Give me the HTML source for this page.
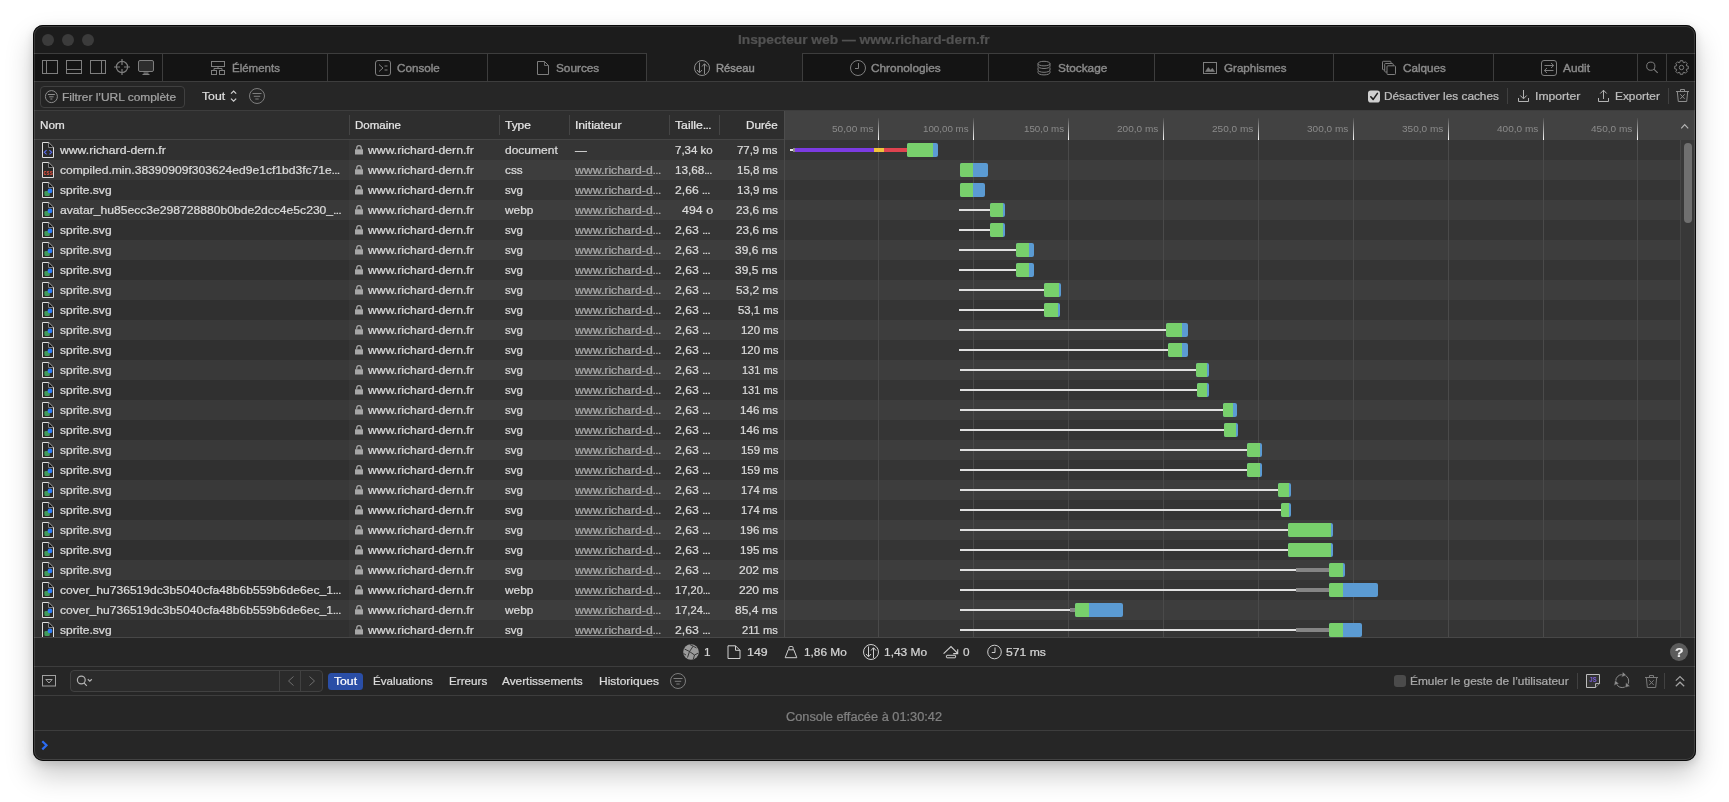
<!DOCTYPE html>
<html lang="fr"><head><meta charset="utf-8"><title>Inspecteur web — www.richard-dern.fr</title>
<style>
html,body{margin:0;padding:0;background:#fff;}
body{width:1729px;height:802px;overflow:hidden;position:relative;font-family:"Liberation Sans",sans-serif;}
#win{will-change:transform;position:absolute;left:33px;top:25px;width:1663px;height:736px;border-radius:10px;overflow:hidden;background:#262626;}
#shadow{position:absolute;left:33px;top:25px;width:1663px;height:736px;border-radius:10px;box-shadow:0 14px 28px rgba(0,0,0,0.21),0 3px 10px rgba(0,0,0,0.13);}
#ring{position:absolute;left:0;top:0;width:1663px;height:736px;border-radius:10px;box-shadow:inset 0 0 0 1px rgba(0,0,0,0.85),inset 0 0 0 2px rgba(255,255,255,0.13);pointer-events:none;}
.t{position:absolute;white-space:pre;line-height:20px;height:20px;transform-origin:0 50%;-webkit-text-stroke:0.24px currentColor;}
span.e{font-size:7.5px;letter-spacing:0;font-weight:700;}
u{text-decoration:underline;text-underline-offset:0.6px;text-decoration-thickness:0.9px;text-decoration-color:#8f8f8f;}
svg{position:absolute;overflow:visible;}
</style></head><body>
<div id="shadow"></div>
<div id="win">
<div style="position:absolute;left:0px;top:0px;width:1663px;height:28px;background:#1c1c1c;"></div><div style="position:absolute;left:9px;top:9px;width:12px;height:12px;background:#3b3b3b;border-radius:50%"></div><div style="position:absolute;left:29px;top:9px;width:12px;height:12px;background:#3b3b3b;border-radius:50%"></div><div style="position:absolute;left:49px;top:9px;width:12px;height:12px;background:#3b3b3b;border-radius:50%"></div><div style="position:absolute;left:0px;top:28px;width:1663px;height:29px;background:#141414;"></div><div style="position:absolute;left:0px;top:28px;width:1663px;height:1px;background:#3d3d3d;"></div><div style="position:absolute;left:0px;top:56px;width:1663px;height:1px;background:#3d3d3d;"></div><div style="position:absolute;left:614px;top:28px;width:155px;height:28px;background:#1c1c1c;"></div><div style="position:absolute;left:129px;top:28px;width:1px;height:28px;background:#3d3d3d;"></div><div style="position:absolute;left:294px;top:28px;width:1px;height:28px;background:#3d3d3d;"></div><div style="position:absolute;left:454px;top:28px;width:1px;height:28px;background:#3d3d3d;"></div><div style="position:absolute;left:613px;top:28px;width:1px;height:28px;background:#3d3d3d;"></div><div style="position:absolute;left:769px;top:28px;width:1px;height:28px;background:#3d3d3d;"></div><div style="position:absolute;left:955px;top:28px;width:1px;height:28px;background:#3d3d3d;"></div><div style="position:absolute;left:1121px;top:28px;width:1px;height:28px;background:#3d3d3d;"></div><div style="position:absolute;left:1300px;top:28px;width:1px;height:28px;background:#3d3d3d;"></div><div style="position:absolute;left:1460px;top:28px;width:1px;height:28px;background:#3d3d3d;"></div><div style="position:absolute;left:1604px;top:28px;width:1px;height:28px;background:#3d3d3d;"></div><div style="position:absolute;left:1633px;top:28px;width:1px;height:28px;background:#3d3d3d;"></div><div style="position:absolute;left:0px;top:57px;width:1663px;height:28px;background:#262626;"></div><div style="position:absolute;left:0px;top:85px;width:1663px;height:1px;background:#3d3d3d;"></div><div style="position:absolute;left:7px;top:61px;width:145px;height:22px;background:#232323;box-sizing:border-box;border:1px solid #404040;border-radius:4px"></div><div style="position:absolute;left:1474px;top:63px;width:1px;height:16px;background:#404040;"></div><div style="position:absolute;left:1635px;top:63px;width:1px;height:16px;background:#404040;"></div><div style="position:absolute;left:0px;top:86px;width:751px;height:28px;background:#2e2e2e;"></div><div style="position:absolute;left:751px;top:86px;width:911px;height:29px;background:#424242;"></div><div style="position:absolute;left:0px;top:114px;width:751px;height:1px;background:#454545;"></div><div style="position:absolute;left:316px;top:90px;width:1px;height:20px;background:#454545;"></div><div style="position:absolute;left:466px;top:90px;width:1px;height:20px;background:#454545;"></div><div style="position:absolute;left:536px;top:90px;width:1px;height:20px;background:#454545;"></div><div style="position:absolute;left:636px;top:90px;width:1px;height:20px;background:#454545;"></div><div style="position:absolute;left:686px;top:90px;width:1px;height:20px;background:#454545;"></div><div style="position:absolute;left:751px;top:86px;width:1px;height:29px;background:#4d4d4d;"></div><div style="position:absolute;left:845px;top:93px;width:1px;height:22px;background:linear-gradient(to bottom,rgba(255,255,255,0.05),rgba(255,255,255,0.98));"></div><div style="position:absolute;left:940px;top:93px;width:1px;height:22px;background:linear-gradient(to bottom,rgba(255,255,255,0.05),rgba(255,255,255,0.98));"></div><div style="position:absolute;left:1035px;top:93px;width:1px;height:22px;background:linear-gradient(to bottom,rgba(255,255,255,0.05),rgba(255,255,255,0.98));"></div><div style="position:absolute;left:1130px;top:93px;width:1px;height:22px;background:linear-gradient(to bottom,rgba(255,255,255,0.05),rgba(255,255,255,0.98));"></div><div style="position:absolute;left:1225px;top:93px;width:1px;height:22px;background:linear-gradient(to bottom,rgba(255,255,255,0.05),rgba(255,255,255,0.98));"></div><div style="position:absolute;left:1320px;top:93px;width:1px;height:22px;background:linear-gradient(to bottom,rgba(255,255,255,0.05),rgba(255,255,255,0.98));"></div><div style="position:absolute;left:1415px;top:93px;width:1px;height:22px;background:linear-gradient(to bottom,rgba(255,255,255,0.05),rgba(255,255,255,0.98));"></div><div style="position:absolute;left:1510px;top:93px;width:1px;height:22px;background:linear-gradient(to bottom,rgba(255,255,255,0.05),rgba(255,255,255,0.98));"></div><div style="position:absolute;left:1604px;top:93px;width:1px;height:22px;background:linear-gradient(to bottom,rgba(255,255,255,0.05),rgba(255,255,255,0.98));"></div><div style="position:absolute;left:0;top:115px;width:1663px;height:497px;overflow:hidden"><div style="position:absolute;left:0px;top:0px;width:316px;height:20px;background:#303030;"></div><div style="position:absolute;left:316px;top:0px;width:1331px;height:20px;background:#353535;"></div><div style="position:absolute;left:0px;top:20px;width:316px;height:20px;background:#393939;"></div><div style="position:absolute;left:316px;top:20px;width:1331px;height:20px;background:#3d3d3d;"></div><div style="position:absolute;left:0px;top:40px;width:316px;height:20px;background:#303030;"></div><div style="position:absolute;left:316px;top:40px;width:1331px;height:20px;background:#353535;"></div><div style="position:absolute;left:0px;top:60px;width:316px;height:20px;background:#393939;"></div><div style="position:absolute;left:316px;top:60px;width:1331px;height:20px;background:#3d3d3d;"></div><div style="position:absolute;left:0px;top:80px;width:316px;height:20px;background:#303030;"></div><div style="position:absolute;left:316px;top:80px;width:1331px;height:20px;background:#353535;"></div><div style="position:absolute;left:0px;top:100px;width:316px;height:20px;background:#393939;"></div><div style="position:absolute;left:316px;top:100px;width:1331px;height:20px;background:#3d3d3d;"></div><div style="position:absolute;left:0px;top:120px;width:316px;height:20px;background:#303030;"></div><div style="position:absolute;left:316px;top:120px;width:1331px;height:20px;background:#353535;"></div><div style="position:absolute;left:0px;top:140px;width:316px;height:20px;background:#393939;"></div><div style="position:absolute;left:316px;top:140px;width:1331px;height:20px;background:#3d3d3d;"></div><div style="position:absolute;left:0px;top:160px;width:316px;height:20px;background:#303030;"></div><div style="position:absolute;left:316px;top:160px;width:1331px;height:20px;background:#353535;"></div><div style="position:absolute;left:0px;top:180px;width:316px;height:20px;background:#393939;"></div><div style="position:absolute;left:316px;top:180px;width:1331px;height:20px;background:#3d3d3d;"></div><div style="position:absolute;left:0px;top:200px;width:316px;height:20px;background:#303030;"></div><div style="position:absolute;left:316px;top:200px;width:1331px;height:20px;background:#353535;"></div><div style="position:absolute;left:0px;top:220px;width:316px;height:20px;background:#393939;"></div><div style="position:absolute;left:316px;top:220px;width:1331px;height:20px;background:#3d3d3d;"></div><div style="position:absolute;left:0px;top:240px;width:316px;height:20px;background:#303030;"></div><div style="position:absolute;left:316px;top:240px;width:1331px;height:20px;background:#353535;"></div><div style="position:absolute;left:0px;top:260px;width:316px;height:20px;background:#393939;"></div><div style="position:absolute;left:316px;top:260px;width:1331px;height:20px;background:#3d3d3d;"></div><div style="position:absolute;left:0px;top:280px;width:316px;height:20px;background:#303030;"></div><div style="position:absolute;left:316px;top:280px;width:1331px;height:20px;background:#353535;"></div><div style="position:absolute;left:0px;top:300px;width:316px;height:20px;background:#393939;"></div><div style="position:absolute;left:316px;top:300px;width:1331px;height:20px;background:#3d3d3d;"></div><div style="position:absolute;left:0px;top:320px;width:316px;height:20px;background:#303030;"></div><div style="position:absolute;left:316px;top:320px;width:1331px;height:20px;background:#353535;"></div><div style="position:absolute;left:0px;top:340px;width:316px;height:20px;background:#393939;"></div><div style="position:absolute;left:316px;top:340px;width:1331px;height:20px;background:#3d3d3d;"></div><div style="position:absolute;left:0px;top:360px;width:316px;height:20px;background:#303030;"></div><div style="position:absolute;left:316px;top:360px;width:1331px;height:20px;background:#353535;"></div><div style="position:absolute;left:0px;top:380px;width:316px;height:20px;background:#393939;"></div><div style="position:absolute;left:316px;top:380px;width:1331px;height:20px;background:#3d3d3d;"></div><div style="position:absolute;left:0px;top:400px;width:316px;height:20px;background:#303030;"></div><div style="position:absolute;left:316px;top:400px;width:1331px;height:20px;background:#353535;"></div><div style="position:absolute;left:0px;top:420px;width:316px;height:20px;background:#393939;"></div><div style="position:absolute;left:316px;top:420px;width:1331px;height:20px;background:#3d3d3d;"></div><div style="position:absolute;left:0px;top:440px;width:316px;height:20px;background:#303030;"></div><div style="position:absolute;left:316px;top:440px;width:1331px;height:20px;background:#353535;"></div><div style="position:absolute;left:0px;top:460px;width:316px;height:20px;background:#393939;"></div><div style="position:absolute;left:316px;top:460px;width:1331px;height:20px;background:#3d3d3d;"></div><div style="position:absolute;left:0px;top:480px;width:316px;height:20px;background:#303030;"></div><div style="position:absolute;left:316px;top:480px;width:1331px;height:20px;background:#353535;"></div><div style="position:absolute;left:751px;top:0px;width:1px;height:500px;background:#4a4a4a;"></div><div style="position:absolute;left:845px;top:0px;width:1px;height:500px;background:#4a4a4a;"></div><div style="position:absolute;left:940px;top:0px;width:1px;height:500px;background:#4a4a4a;"></div><div style="position:absolute;left:1035px;top:0px;width:1px;height:500px;background:#4a4a4a;"></div><div style="position:absolute;left:1130px;top:0px;width:1px;height:500px;background:#4a4a4a;"></div><div style="position:absolute;left:1225px;top:0px;width:1px;height:500px;background:#4a4a4a;"></div><div style="position:absolute;left:1320px;top:0px;width:1px;height:500px;background:#4a4a4a;"></div><div style="position:absolute;left:1415px;top:0px;width:1px;height:500px;background:#4a4a4a;"></div><div style="position:absolute;left:1510px;top:0px;width:1px;height:500px;background:#4a4a4a;"></div><div style="position:absolute;left:1604px;top:0px;width:1px;height:500px;background:#4a4a4a;"></div><div style="position:absolute;left:1647px;top:0px;width:15px;height:500px;background:#383838;"></div><div style="position:absolute;left:1647px;top:0px;width:1px;height:500px;background:#454545;"></div><div style="position:absolute;left:1651px;top:3px;width:8px;height:80px;background:#6f6f6f;border-radius:4px"></div><svg style="left:9px;top:2px" width="12" height="16" viewBox="0 0 12 16"><path d="M0.5 0.5 H6.7 L11.5 5.3 V15.5 H0.5 Z" fill="#2a2a2a" stroke="#dedede" stroke-width="1"/><path d="M6.9 1.4 V5.1 H10.6 Z" fill="#0a0a0a" stroke="#0a0a0a" stroke-width="0.6"/><path d="M6.6 0.8 V5.4 H11.2" fill="none" stroke="#bdbdbd" stroke-width="0.7"/><path d="M4.6 8.2 L2.3 10.3 L4.6 12.4 M7.4 8.2 L9.7 10.3 L7.4 12.4" fill="none" stroke="#5a6cf2" stroke-width="1.1"/></svg><svg style="left:322px;top:4.5px" width="8" height="10" viewBox="0 0 8 10"><rect x="0" y="4.3" width="8" height="5.2" fill="#a8a8a8"/><path d="M1.75 4.5 V2.9 A2.25 2.3 0 0 1 6.25 2.9 V4.5" fill="none" stroke="#a8a8a8" stroke-width="1.25"/></svg><div style="position:absolute;left:757px;top:9px;width:4px;height:2px;background:#e6e6e6;"></div><div style="position:absolute;left:760px;top:8px;width:2px;height:4px;background:#8a8a8a;"></div><div style="position:absolute;left:761.6px;top:8px;width:79.4px;height:4px;background:#7c3be2;"></div><div style="position:absolute;left:841px;top:8px;width:10px;height:4px;background:#f0c23c;"></div><div style="position:absolute;left:851px;top:8px;width:23px;height:4px;background:#e0434f;"></div><div style="position:absolute;left:874px;top:3px;width:31px;height:14px;background:#5b9bd3;border-radius:2px"></div><div style="position:absolute;left:874px;top:3px;width:26px;height:14px;background:#78d06c;border-radius:2px 0 0 2px"></div><svg style="left:9px;top:22px" width="12" height="16" viewBox="0 0 12 16"><path d="M0.5 0.5 H6.7 L11.5 5.3 V15.5 H0.5 Z" fill="#2a2a2a" stroke="#dedede" stroke-width="1"/><path d="M6.9 1.4 V5.1 H10.6 Z" fill="#0a0a0a" stroke="#0a0a0a" stroke-width="0.6"/><path d="M6.6 0.8 V5.4 H11.2" fill="none" stroke="#bdbdbd" stroke-width="0.7"/><text x="6.1" y="12.6" text-anchor="middle" font-family="Liberation Sans,sans-serif" font-weight="700" font-size="6.4" fill="#e2513f" textLength="9.4" lengthAdjust="spacingAndGlyphs">css</text></svg><svg style="left:322px;top:24.5px" width="8" height="10" viewBox="0 0 8 10"><rect x="0" y="4.3" width="8" height="5.2" fill="#a8a8a8"/><path d="M1.75 4.5 V2.9 A2.25 2.3 0 0 1 6.25 2.9 V4.5" fill="none" stroke="#a8a8a8" stroke-width="1.25"/></svg><div style="position:absolute;left:927px;top:23px;width:28px;height:14px;background:#5b9bd3;border-radius:2px"></div><div style="position:absolute;left:927px;top:23px;width:13px;height:14px;background:#78d06c;border-radius:2px 0 0 2px"></div><svg style="left:9px;top:42px" width="12" height="16" viewBox="0 0 12 16"><path d="M0.5 0.5 H6.7 L11.5 5.3 V15.5 H0.5 Z" fill="#2a2a2a" stroke="#dedede" stroke-width="1"/><path d="M6.9 1.4 V5.1 H10.6 Z" fill="#0a0a0a" stroke="#0a0a0a" stroke-width="0.6"/><path d="M6.6 0.8 V5.4 H11.2" fill="none" stroke="#bdbdbd" stroke-width="0.7"/><rect x="2.4" y="9" width="5.4" height="5" rx="1.2" fill="#419a5b"/><circle cx="8" cy="8.9" r="2.4" fill="#2e7cf6"/></svg><svg style="left:322px;top:44.5px" width="8" height="10" viewBox="0 0 8 10"><rect x="0" y="4.3" width="8" height="5.2" fill="#a8a8a8"/><path d="M1.75 4.5 V2.9 A2.25 2.3 0 0 1 6.25 2.9 V4.5" fill="none" stroke="#a8a8a8" stroke-width="1.25"/></svg><div style="position:absolute;left:927px;top:43px;width:25px;height:14px;background:#5b9bd3;border-radius:2px"></div><div style="position:absolute;left:927px;top:43px;width:13px;height:14px;background:#78d06c;border-radius:2px 0 0 2px"></div><svg style="left:9px;top:62px" width="12" height="16" viewBox="0 0 12 16"><path d="M0.5 0.5 H6.7 L11.5 5.3 V15.5 H0.5 Z" fill="#2a2a2a" stroke="#dedede" stroke-width="1"/><path d="M6.9 1.4 V5.1 H10.6 Z" fill="#0a0a0a" stroke="#0a0a0a" stroke-width="0.6"/><path d="M6.6 0.8 V5.4 H11.2" fill="none" stroke="#bdbdbd" stroke-width="0.7"/><rect x="2.4" y="9" width="5.4" height="5" rx="1.2" fill="#419a5b"/><circle cx="8" cy="8.9" r="2.4" fill="#2e7cf6"/></svg><svg style="left:322px;top:64.5px" width="8" height="10" viewBox="0 0 8 10"><rect x="0" y="4.3" width="8" height="5.2" fill="#a8a8a8"/><path d="M1.75 4.5 V2.9 A2.25 2.3 0 0 1 6.25 2.9 V4.5" fill="none" stroke="#a8a8a8" stroke-width="1.25"/></svg><div style="position:absolute;left:926px;top:69px;width:31px;height:2px;background:#e2e2e2;"></div><div style="position:absolute;left:957px;top:63px;width:15px;height:14px;background:#5b9bd3;border-radius:2px"></div><div style="position:absolute;left:957px;top:63px;width:13px;height:14px;background:#78d06c;border-radius:2px 0 0 2px"></div><svg style="left:9px;top:82px" width="12" height="16" viewBox="0 0 12 16"><path d="M0.5 0.5 H6.7 L11.5 5.3 V15.5 H0.5 Z" fill="#2a2a2a" stroke="#dedede" stroke-width="1"/><path d="M6.9 1.4 V5.1 H10.6 Z" fill="#0a0a0a" stroke="#0a0a0a" stroke-width="0.6"/><path d="M6.6 0.8 V5.4 H11.2" fill="none" stroke="#bdbdbd" stroke-width="0.7"/><rect x="2.4" y="9" width="5.4" height="5" rx="1.2" fill="#419a5b"/><circle cx="8" cy="8.9" r="2.4" fill="#2e7cf6"/></svg><svg style="left:322px;top:84.5px" width="8" height="10" viewBox="0 0 8 10"><rect x="0" y="4.3" width="8" height="5.2" fill="#a8a8a8"/><path d="M1.75 4.5 V2.9 A2.25 2.3 0 0 1 6.25 2.9 V4.5" fill="none" stroke="#a8a8a8" stroke-width="1.25"/></svg><div style="position:absolute;left:926px;top:89px;width:31px;height:2px;background:#e2e2e2;"></div><div style="position:absolute;left:957px;top:83px;width:15px;height:14px;background:#5b9bd3;border-radius:2px"></div><div style="position:absolute;left:957px;top:83px;width:13px;height:14px;background:#78d06c;border-radius:2px 0 0 2px"></div><svg style="left:9px;top:102px" width="12" height="16" viewBox="0 0 12 16"><path d="M0.5 0.5 H6.7 L11.5 5.3 V15.5 H0.5 Z" fill="#2a2a2a" stroke="#dedede" stroke-width="1"/><path d="M6.9 1.4 V5.1 H10.6 Z" fill="#0a0a0a" stroke="#0a0a0a" stroke-width="0.6"/><path d="M6.6 0.8 V5.4 H11.2" fill="none" stroke="#bdbdbd" stroke-width="0.7"/><rect x="2.4" y="9" width="5.4" height="5" rx="1.2" fill="#419a5b"/><circle cx="8" cy="8.9" r="2.4" fill="#2e7cf6"/></svg><svg style="left:322px;top:104.5px" width="8" height="10" viewBox="0 0 8 10"><rect x="0" y="4.3" width="8" height="5.2" fill="#a8a8a8"/><path d="M1.75 4.5 V2.9 A2.25 2.3 0 0 1 6.25 2.9 V4.5" fill="none" stroke="#a8a8a8" stroke-width="1.25"/></svg><div style="position:absolute;left:926px;top:109px;width:57px;height:2px;background:#e2e2e2;"></div><div style="position:absolute;left:983px;top:103px;width:18px;height:14px;background:#5b9bd3;border-radius:2px"></div><div style="position:absolute;left:983px;top:103px;width:13px;height:14px;background:#78d06c;border-radius:2px 0 0 2px"></div><svg style="left:9px;top:122px" width="12" height="16" viewBox="0 0 12 16"><path d="M0.5 0.5 H6.7 L11.5 5.3 V15.5 H0.5 Z" fill="#2a2a2a" stroke="#dedede" stroke-width="1"/><path d="M6.9 1.4 V5.1 H10.6 Z" fill="#0a0a0a" stroke="#0a0a0a" stroke-width="0.6"/><path d="M6.6 0.8 V5.4 H11.2" fill="none" stroke="#bdbdbd" stroke-width="0.7"/><rect x="2.4" y="9" width="5.4" height="5" rx="1.2" fill="#419a5b"/><circle cx="8" cy="8.9" r="2.4" fill="#2e7cf6"/></svg><svg style="left:322px;top:124.5px" width="8" height="10" viewBox="0 0 8 10"><rect x="0" y="4.3" width="8" height="5.2" fill="#a8a8a8"/><path d="M1.75 4.5 V2.9 A2.25 2.3 0 0 1 6.25 2.9 V4.5" fill="none" stroke="#a8a8a8" stroke-width="1.25"/></svg><div style="position:absolute;left:926px;top:129px;width:57px;height:2px;background:#e2e2e2;"></div><div style="position:absolute;left:983px;top:123px;width:18px;height:14px;background:#5b9bd3;border-radius:2px"></div><div style="position:absolute;left:983px;top:123px;width:13px;height:14px;background:#78d06c;border-radius:2px 0 0 2px"></div><svg style="left:9px;top:142px" width="12" height="16" viewBox="0 0 12 16"><path d="M0.5 0.5 H6.7 L11.5 5.3 V15.5 H0.5 Z" fill="#2a2a2a" stroke="#dedede" stroke-width="1"/><path d="M6.9 1.4 V5.1 H10.6 Z" fill="#0a0a0a" stroke="#0a0a0a" stroke-width="0.6"/><path d="M6.6 0.8 V5.4 H11.2" fill="none" stroke="#bdbdbd" stroke-width="0.7"/><rect x="2.4" y="9" width="5.4" height="5" rx="1.2" fill="#419a5b"/><circle cx="8" cy="8.9" r="2.4" fill="#2e7cf6"/></svg><svg style="left:322px;top:144.5px" width="8" height="10" viewBox="0 0 8 10"><rect x="0" y="4.3" width="8" height="5.2" fill="#a8a8a8"/><path d="M1.75 4.5 V2.9 A2.25 2.3 0 0 1 6.25 2.9 V4.5" fill="none" stroke="#a8a8a8" stroke-width="1.25"/></svg><div style="position:absolute;left:926px;top:149px;width:85px;height:2px;background:#e2e2e2;"></div><div style="position:absolute;left:1011px;top:143px;width:17px;height:14px;background:#5b9bd3;border-radius:2px"></div><div style="position:absolute;left:1011px;top:143px;width:15px;height:14px;background:#78d06c;border-radius:2px 0 0 2px"></div><svg style="left:9px;top:162px" width="12" height="16" viewBox="0 0 12 16"><path d="M0.5 0.5 H6.7 L11.5 5.3 V15.5 H0.5 Z" fill="#2a2a2a" stroke="#dedede" stroke-width="1"/><path d="M6.9 1.4 V5.1 H10.6 Z" fill="#0a0a0a" stroke="#0a0a0a" stroke-width="0.6"/><path d="M6.6 0.8 V5.4 H11.2" fill="none" stroke="#bdbdbd" stroke-width="0.7"/><rect x="2.4" y="9" width="5.4" height="5" rx="1.2" fill="#419a5b"/><circle cx="8" cy="8.9" r="2.4" fill="#2e7cf6"/></svg><svg style="left:322px;top:164.5px" width="8" height="10" viewBox="0 0 8 10"><rect x="0" y="4.3" width="8" height="5.2" fill="#a8a8a8"/><path d="M1.75 4.5 V2.9 A2.25 2.3 0 0 1 6.25 2.9 V4.5" fill="none" stroke="#a8a8a8" stroke-width="1.25"/></svg><div style="position:absolute;left:926px;top:169px;width:85px;height:2px;background:#e2e2e2;"></div><div style="position:absolute;left:1011px;top:163px;width:16px;height:14px;background:#5b9bd3;border-radius:2px"></div><div style="position:absolute;left:1011px;top:163px;width:14px;height:14px;background:#78d06c;border-radius:2px 0 0 2px"></div><svg style="left:9px;top:182px" width="12" height="16" viewBox="0 0 12 16"><path d="M0.5 0.5 H6.7 L11.5 5.3 V15.5 H0.5 Z" fill="#2a2a2a" stroke="#dedede" stroke-width="1"/><path d="M6.9 1.4 V5.1 H10.6 Z" fill="#0a0a0a" stroke="#0a0a0a" stroke-width="0.6"/><path d="M6.6 0.8 V5.4 H11.2" fill="none" stroke="#bdbdbd" stroke-width="0.7"/><rect x="2.4" y="9" width="5.4" height="5" rx="1.2" fill="#419a5b"/><circle cx="8" cy="8.9" r="2.4" fill="#2e7cf6"/></svg><svg style="left:322px;top:184.5px" width="8" height="10" viewBox="0 0 8 10"><rect x="0" y="4.3" width="8" height="5.2" fill="#a8a8a8"/><path d="M1.75 4.5 V2.9 A2.25 2.3 0 0 1 6.25 2.9 V4.5" fill="none" stroke="#a8a8a8" stroke-width="1.25"/></svg><div style="position:absolute;left:926px;top:189px;width:207px;height:2px;background:#e2e2e2;"></div><div style="position:absolute;left:1133px;top:183px;width:22px;height:14px;background:#5b9bd3;border-radius:2px"></div><div style="position:absolute;left:1133px;top:183px;width:16px;height:14px;background:#78d06c;border-radius:2px 0 0 2px"></div><svg style="left:9px;top:202px" width="12" height="16" viewBox="0 0 12 16"><path d="M0.5 0.5 H6.7 L11.5 5.3 V15.5 H0.5 Z" fill="#2a2a2a" stroke="#dedede" stroke-width="1"/><path d="M6.9 1.4 V5.1 H10.6 Z" fill="#0a0a0a" stroke="#0a0a0a" stroke-width="0.6"/><path d="M6.6 0.8 V5.4 H11.2" fill="none" stroke="#bdbdbd" stroke-width="0.7"/><rect x="2.4" y="9" width="5.4" height="5" rx="1.2" fill="#419a5b"/><circle cx="8" cy="8.9" r="2.4" fill="#2e7cf6"/></svg><svg style="left:322px;top:204.5px" width="8" height="10" viewBox="0 0 8 10"><rect x="0" y="4.3" width="8" height="5.2" fill="#a8a8a8"/><path d="M1.75 4.5 V2.9 A2.25 2.3 0 0 1 6.25 2.9 V4.5" fill="none" stroke="#a8a8a8" stroke-width="1.25"/></svg><div style="position:absolute;left:926px;top:209px;width:209px;height:2px;background:#e2e2e2;"></div><div style="position:absolute;left:1135px;top:203px;width:20px;height:14px;background:#5b9bd3;border-radius:2px"></div><div style="position:absolute;left:1135px;top:203px;width:14px;height:14px;background:#78d06c;border-radius:2px 0 0 2px"></div><svg style="left:9px;top:222px" width="12" height="16" viewBox="0 0 12 16"><path d="M0.5 0.5 H6.7 L11.5 5.3 V15.5 H0.5 Z" fill="#2a2a2a" stroke="#dedede" stroke-width="1"/><path d="M6.9 1.4 V5.1 H10.6 Z" fill="#0a0a0a" stroke="#0a0a0a" stroke-width="0.6"/><path d="M6.6 0.8 V5.4 H11.2" fill="none" stroke="#bdbdbd" stroke-width="0.7"/><rect x="2.4" y="9" width="5.4" height="5" rx="1.2" fill="#419a5b"/><circle cx="8" cy="8.9" r="2.4" fill="#2e7cf6"/></svg><svg style="left:322px;top:224.5px" width="8" height="10" viewBox="0 0 8 10"><rect x="0" y="4.3" width="8" height="5.2" fill="#a8a8a8"/><path d="M1.75 4.5 V2.9 A2.25 2.3 0 0 1 6.25 2.9 V4.5" fill="none" stroke="#a8a8a8" stroke-width="1.25"/></svg><div style="position:absolute;left:927px;top:229px;width:236px;height:2px;background:#e2e2e2;"></div><div style="position:absolute;left:1163px;top:223px;width:13px;height:14px;background:#5b9bd3;border-radius:2px"></div><div style="position:absolute;left:1163px;top:223px;width:11px;height:14px;background:#78d06c;border-radius:2px 0 0 2px"></div><svg style="left:9px;top:242px" width="12" height="16" viewBox="0 0 12 16"><path d="M0.5 0.5 H6.7 L11.5 5.3 V15.5 H0.5 Z" fill="#2a2a2a" stroke="#dedede" stroke-width="1"/><path d="M6.9 1.4 V5.1 H10.6 Z" fill="#0a0a0a" stroke="#0a0a0a" stroke-width="0.6"/><path d="M6.6 0.8 V5.4 H11.2" fill="none" stroke="#bdbdbd" stroke-width="0.7"/><rect x="2.4" y="9" width="5.4" height="5" rx="1.2" fill="#419a5b"/><circle cx="8" cy="8.9" r="2.4" fill="#2e7cf6"/></svg><svg style="left:322px;top:244.5px" width="8" height="10" viewBox="0 0 8 10"><rect x="0" y="4.3" width="8" height="5.2" fill="#a8a8a8"/><path d="M1.75 4.5 V2.9 A2.25 2.3 0 0 1 6.25 2.9 V4.5" fill="none" stroke="#a8a8a8" stroke-width="1.25"/></svg><div style="position:absolute;left:927px;top:249px;width:237px;height:2px;background:#e2e2e2;"></div><div style="position:absolute;left:1164px;top:243px;width:12px;height:14px;background:#5b9bd3;border-radius:2px"></div><div style="position:absolute;left:1164px;top:243px;width:10px;height:14px;background:#78d06c;border-radius:2px 0 0 2px"></div><svg style="left:9px;top:262px" width="12" height="16" viewBox="0 0 12 16"><path d="M0.5 0.5 H6.7 L11.5 5.3 V15.5 H0.5 Z" fill="#2a2a2a" stroke="#dedede" stroke-width="1"/><path d="M6.9 1.4 V5.1 H10.6 Z" fill="#0a0a0a" stroke="#0a0a0a" stroke-width="0.6"/><path d="M6.6 0.8 V5.4 H11.2" fill="none" stroke="#bdbdbd" stroke-width="0.7"/><rect x="2.4" y="9" width="5.4" height="5" rx="1.2" fill="#419a5b"/><circle cx="8" cy="8.9" r="2.4" fill="#2e7cf6"/></svg><svg style="left:322px;top:264.5px" width="8" height="10" viewBox="0 0 8 10"><rect x="0" y="4.3" width="8" height="5.2" fill="#a8a8a8"/><path d="M1.75 4.5 V2.9 A2.25 2.3 0 0 1 6.25 2.9 V4.5" fill="none" stroke="#a8a8a8" stroke-width="1.25"/></svg><div style="position:absolute;left:927px;top:269px;width:263px;height:2px;background:#e2e2e2;"></div><div style="position:absolute;left:1190px;top:263px;width:14px;height:14px;background:#5b9bd3;border-radius:2px"></div><div style="position:absolute;left:1190px;top:263px;width:10px;height:14px;background:#78d06c;border-radius:2px 0 0 2px"></div><svg style="left:9px;top:282px" width="12" height="16" viewBox="0 0 12 16"><path d="M0.5 0.5 H6.7 L11.5 5.3 V15.5 H0.5 Z" fill="#2a2a2a" stroke="#dedede" stroke-width="1"/><path d="M6.9 1.4 V5.1 H10.6 Z" fill="#0a0a0a" stroke="#0a0a0a" stroke-width="0.6"/><path d="M6.6 0.8 V5.4 H11.2" fill="none" stroke="#bdbdbd" stroke-width="0.7"/><rect x="2.4" y="9" width="5.4" height="5" rx="1.2" fill="#419a5b"/><circle cx="8" cy="8.9" r="2.4" fill="#2e7cf6"/></svg><svg style="left:322px;top:284.5px" width="8" height="10" viewBox="0 0 8 10"><rect x="0" y="4.3" width="8" height="5.2" fill="#a8a8a8"/><path d="M1.75 4.5 V2.9 A2.25 2.3 0 0 1 6.25 2.9 V4.5" fill="none" stroke="#a8a8a8" stroke-width="1.25"/></svg><div style="position:absolute;left:927px;top:289px;width:264px;height:2px;background:#e2e2e2;"></div><div style="position:absolute;left:1191px;top:283px;width:14px;height:14px;background:#5b9bd3;border-radius:2px"></div><div style="position:absolute;left:1191px;top:283px;width:12px;height:14px;background:#78d06c;border-radius:2px 0 0 2px"></div><svg style="left:9px;top:302px" width="12" height="16" viewBox="0 0 12 16"><path d="M0.5 0.5 H6.7 L11.5 5.3 V15.5 H0.5 Z" fill="#2a2a2a" stroke="#dedede" stroke-width="1"/><path d="M6.9 1.4 V5.1 H10.6 Z" fill="#0a0a0a" stroke="#0a0a0a" stroke-width="0.6"/><path d="M6.6 0.8 V5.4 H11.2" fill="none" stroke="#bdbdbd" stroke-width="0.7"/><rect x="2.4" y="9" width="5.4" height="5" rx="1.2" fill="#419a5b"/><circle cx="8" cy="8.9" r="2.4" fill="#2e7cf6"/></svg><svg style="left:322px;top:304.5px" width="8" height="10" viewBox="0 0 8 10"><rect x="0" y="4.3" width="8" height="5.2" fill="#a8a8a8"/><path d="M1.75 4.5 V2.9 A2.25 2.3 0 0 1 6.25 2.9 V4.5" fill="none" stroke="#a8a8a8" stroke-width="1.25"/></svg><div style="position:absolute;left:927px;top:309px;width:287px;height:2px;background:#e2e2e2;"></div><div style="position:absolute;left:1214px;top:303px;width:15px;height:14px;background:#5b9bd3;border-radius:2px"></div><div style="position:absolute;left:1214px;top:303px;width:13px;height:14px;background:#78d06c;border-radius:2px 0 0 2px"></div><svg style="left:9px;top:322px" width="12" height="16" viewBox="0 0 12 16"><path d="M0.5 0.5 H6.7 L11.5 5.3 V15.5 H0.5 Z" fill="#2a2a2a" stroke="#dedede" stroke-width="1"/><path d="M6.9 1.4 V5.1 H10.6 Z" fill="#0a0a0a" stroke="#0a0a0a" stroke-width="0.6"/><path d="M6.6 0.8 V5.4 H11.2" fill="none" stroke="#bdbdbd" stroke-width="0.7"/><rect x="2.4" y="9" width="5.4" height="5" rx="1.2" fill="#419a5b"/><circle cx="8" cy="8.9" r="2.4" fill="#2e7cf6"/></svg><svg style="left:322px;top:324.5px" width="8" height="10" viewBox="0 0 8 10"><rect x="0" y="4.3" width="8" height="5.2" fill="#a8a8a8"/><path d="M1.75 4.5 V2.9 A2.25 2.3 0 0 1 6.25 2.9 V4.5" fill="none" stroke="#a8a8a8" stroke-width="1.25"/></svg><div style="position:absolute;left:927px;top:329px;width:287px;height:2px;background:#e2e2e2;"></div><div style="position:absolute;left:1214px;top:323px;width:15px;height:14px;background:#5b9bd3;border-radius:2px"></div><div style="position:absolute;left:1214px;top:323px;width:13px;height:14px;background:#78d06c;border-radius:2px 0 0 2px"></div><svg style="left:9px;top:342px" width="12" height="16" viewBox="0 0 12 16"><path d="M0.5 0.5 H6.7 L11.5 5.3 V15.5 H0.5 Z" fill="#2a2a2a" stroke="#dedede" stroke-width="1"/><path d="M6.9 1.4 V5.1 H10.6 Z" fill="#0a0a0a" stroke="#0a0a0a" stroke-width="0.6"/><path d="M6.6 0.8 V5.4 H11.2" fill="none" stroke="#bdbdbd" stroke-width="0.7"/><rect x="2.4" y="9" width="5.4" height="5" rx="1.2" fill="#419a5b"/><circle cx="8" cy="8.9" r="2.4" fill="#2e7cf6"/></svg><svg style="left:322px;top:344.5px" width="8" height="10" viewBox="0 0 8 10"><rect x="0" y="4.3" width="8" height="5.2" fill="#a8a8a8"/><path d="M1.75 4.5 V2.9 A2.25 2.3 0 0 1 6.25 2.9 V4.5" fill="none" stroke="#a8a8a8" stroke-width="1.25"/></svg><div style="position:absolute;left:927px;top:349px;width:318px;height:2px;background:#e2e2e2;"></div><div style="position:absolute;left:1245px;top:343px;width:13px;height:14px;background:#5b9bd3;border-radius:2px"></div><div style="position:absolute;left:1245px;top:343px;width:11px;height:14px;background:#78d06c;border-radius:2px 0 0 2px"></div><svg style="left:9px;top:362px" width="12" height="16" viewBox="0 0 12 16"><path d="M0.5 0.5 H6.7 L11.5 5.3 V15.5 H0.5 Z" fill="#2a2a2a" stroke="#dedede" stroke-width="1"/><path d="M6.9 1.4 V5.1 H10.6 Z" fill="#0a0a0a" stroke="#0a0a0a" stroke-width="0.6"/><path d="M6.6 0.8 V5.4 H11.2" fill="none" stroke="#bdbdbd" stroke-width="0.7"/><rect x="2.4" y="9" width="5.4" height="5" rx="1.2" fill="#419a5b"/><circle cx="8" cy="8.9" r="2.4" fill="#2e7cf6"/></svg><svg style="left:322px;top:364.5px" width="8" height="10" viewBox="0 0 8 10"><rect x="0" y="4.3" width="8" height="5.2" fill="#a8a8a8"/><path d="M1.75 4.5 V2.9 A2.25 2.3 0 0 1 6.25 2.9 V4.5" fill="none" stroke="#a8a8a8" stroke-width="1.25"/></svg><div style="position:absolute;left:927px;top:369px;width:321px;height:2px;background:#e2e2e2;"></div><div style="position:absolute;left:1248px;top:363px;width:10px;height:14px;background:#5b9bd3;border-radius:2px"></div><div style="position:absolute;left:1248px;top:363px;width:8px;height:14px;background:#78d06c;border-radius:2px 0 0 2px"></div><svg style="left:9px;top:382px" width="12" height="16" viewBox="0 0 12 16"><path d="M0.5 0.5 H6.7 L11.5 5.3 V15.5 H0.5 Z" fill="#2a2a2a" stroke="#dedede" stroke-width="1"/><path d="M6.9 1.4 V5.1 H10.6 Z" fill="#0a0a0a" stroke="#0a0a0a" stroke-width="0.6"/><path d="M6.6 0.8 V5.4 H11.2" fill="none" stroke="#bdbdbd" stroke-width="0.7"/><rect x="2.4" y="9" width="5.4" height="5" rx="1.2" fill="#419a5b"/><circle cx="8" cy="8.9" r="2.4" fill="#2e7cf6"/></svg><svg style="left:322px;top:384.5px" width="8" height="10" viewBox="0 0 8 10"><rect x="0" y="4.3" width="8" height="5.2" fill="#a8a8a8"/><path d="M1.75 4.5 V2.9 A2.25 2.3 0 0 1 6.25 2.9 V4.5" fill="none" stroke="#a8a8a8" stroke-width="1.25"/></svg><div style="position:absolute;left:927px;top:389px;width:328px;height:2px;background:#e2e2e2;"></div><div style="position:absolute;left:1255px;top:383px;width:45px;height:14px;background:#5b9bd3;border-radius:2px"></div><div style="position:absolute;left:1255px;top:383px;width:43px;height:14px;background:#78d06c;border-radius:2px 0 0 2px"></div><svg style="left:9px;top:402px" width="12" height="16" viewBox="0 0 12 16"><path d="M0.5 0.5 H6.7 L11.5 5.3 V15.5 H0.5 Z" fill="#2a2a2a" stroke="#dedede" stroke-width="1"/><path d="M6.9 1.4 V5.1 H10.6 Z" fill="#0a0a0a" stroke="#0a0a0a" stroke-width="0.6"/><path d="M6.6 0.8 V5.4 H11.2" fill="none" stroke="#bdbdbd" stroke-width="0.7"/><rect x="2.4" y="9" width="5.4" height="5" rx="1.2" fill="#419a5b"/><circle cx="8" cy="8.9" r="2.4" fill="#2e7cf6"/></svg><svg style="left:322px;top:404.5px" width="8" height="10" viewBox="0 0 8 10"><rect x="0" y="4.3" width="8" height="5.2" fill="#a8a8a8"/><path d="M1.75 4.5 V2.9 A2.25 2.3 0 0 1 6.25 2.9 V4.5" fill="none" stroke="#a8a8a8" stroke-width="1.25"/></svg><div style="position:absolute;left:927px;top:409px;width:328px;height:2px;background:#e2e2e2;"></div><div style="position:absolute;left:1255px;top:403px;width:45px;height:14px;background:#5b9bd3;border-radius:2px"></div><div style="position:absolute;left:1255px;top:403px;width:43px;height:14px;background:#78d06c;border-radius:2px 0 0 2px"></div><svg style="left:9px;top:422px" width="12" height="16" viewBox="0 0 12 16"><path d="M0.5 0.5 H6.7 L11.5 5.3 V15.5 H0.5 Z" fill="#2a2a2a" stroke="#dedede" stroke-width="1"/><path d="M6.9 1.4 V5.1 H10.6 Z" fill="#0a0a0a" stroke="#0a0a0a" stroke-width="0.6"/><path d="M6.6 0.8 V5.4 H11.2" fill="none" stroke="#bdbdbd" stroke-width="0.7"/><rect x="2.4" y="9" width="5.4" height="5" rx="1.2" fill="#419a5b"/><circle cx="8" cy="8.9" r="2.4" fill="#2e7cf6"/></svg><svg style="left:322px;top:424.5px" width="8" height="10" viewBox="0 0 8 10"><rect x="0" y="4.3" width="8" height="5.2" fill="#a8a8a8"/><path d="M1.75 4.5 V2.9 A2.25 2.3 0 0 1 6.25 2.9 V4.5" fill="none" stroke="#a8a8a8" stroke-width="1.25"/></svg><div style="position:absolute;left:927px;top:429px;width:336px;height:2px;background:#e2e2e2;"></div><div style="position:absolute;left:1263px;top:428px;width:33px;height:4px;background:#858585;"></div><div style="position:absolute;left:1296px;top:423px;width:16px;height:14px;background:#5b9bd3;border-radius:2px"></div><div style="position:absolute;left:1296px;top:423px;width:14px;height:14px;background:#78d06c;border-radius:2px 0 0 2px"></div><svg style="left:9px;top:442px" width="12" height="16" viewBox="0 0 12 16"><path d="M0.5 0.5 H6.7 L11.5 5.3 V15.5 H0.5 Z" fill="#2a2a2a" stroke="#dedede" stroke-width="1"/><path d="M6.9 1.4 V5.1 H10.6 Z" fill="#0a0a0a" stroke="#0a0a0a" stroke-width="0.6"/><path d="M6.6 0.8 V5.4 H11.2" fill="none" stroke="#bdbdbd" stroke-width="0.7"/><rect x="2.4" y="9" width="5.4" height="5" rx="1.2" fill="#419a5b"/><circle cx="8" cy="8.9" r="2.4" fill="#2e7cf6"/></svg><svg style="left:322px;top:444.5px" width="8" height="10" viewBox="0 0 8 10"><rect x="0" y="4.3" width="8" height="5.2" fill="#a8a8a8"/><path d="M1.75 4.5 V2.9 A2.25 2.3 0 0 1 6.25 2.9 V4.5" fill="none" stroke="#a8a8a8" stroke-width="1.25"/></svg><div style="position:absolute;left:927px;top:449px;width:336px;height:2px;background:#e2e2e2;"></div><div style="position:absolute;left:1263px;top:448px;width:33px;height:4px;background:#858585;"></div><div style="position:absolute;left:1296px;top:443px;width:49px;height:14px;background:#5b9bd3;border-radius:2px"></div><div style="position:absolute;left:1296px;top:443px;width:14px;height:14px;background:#78d06c;border-radius:2px 0 0 2px"></div><svg style="left:9px;top:462px" width="12" height="16" viewBox="0 0 12 16"><path d="M0.5 0.5 H6.7 L11.5 5.3 V15.5 H0.5 Z" fill="#2a2a2a" stroke="#dedede" stroke-width="1"/><path d="M6.9 1.4 V5.1 H10.6 Z" fill="#0a0a0a" stroke="#0a0a0a" stroke-width="0.6"/><path d="M6.6 0.8 V5.4 H11.2" fill="none" stroke="#bdbdbd" stroke-width="0.7"/><rect x="2.4" y="9" width="5.4" height="5" rx="1.2" fill="#419a5b"/><circle cx="8" cy="8.9" r="2.4" fill="#2e7cf6"/></svg><svg style="left:322px;top:464.5px" width="8" height="10" viewBox="0 0 8 10"><rect x="0" y="4.3" width="8" height="5.2" fill="#a8a8a8"/><path d="M1.75 4.5 V2.9 A2.25 2.3 0 0 1 6.25 2.9 V4.5" fill="none" stroke="#a8a8a8" stroke-width="1.25"/></svg><div style="position:absolute;left:927px;top:469px;width:110px;height:2px;background:#e2e2e2;"></div><div style="position:absolute;left:1037px;top:468px;width:5px;height:4px;background:#858585;"></div><div style="position:absolute;left:1042px;top:463px;width:48px;height:14px;background:#5b9bd3;border-radius:2px"></div><div style="position:absolute;left:1042px;top:463px;width:14px;height:14px;background:#78d06c;border-radius:2px 0 0 2px"></div><svg style="left:9px;top:482px" width="12" height="16" viewBox="0 0 12 16"><path d="M0.5 0.5 H6.7 L11.5 5.3 V15.5 H0.5 Z" fill="#2a2a2a" stroke="#dedede" stroke-width="1"/><path d="M6.9 1.4 V5.1 H10.6 Z" fill="#0a0a0a" stroke="#0a0a0a" stroke-width="0.6"/><path d="M6.6 0.8 V5.4 H11.2" fill="none" stroke="#bdbdbd" stroke-width="0.7"/><rect x="2.4" y="9" width="5.4" height="5" rx="1.2" fill="#419a5b"/><circle cx="8" cy="8.9" r="2.4" fill="#2e7cf6"/></svg><svg style="left:322px;top:484.5px" width="8" height="10" viewBox="0 0 8 10"><rect x="0" y="4.3" width="8" height="5.2" fill="#a8a8a8"/><path d="M1.75 4.5 V2.9 A2.25 2.3 0 0 1 6.25 2.9 V4.5" fill="none" stroke="#a8a8a8" stroke-width="1.25"/></svg><div style="position:absolute;left:927px;top:489px;width:336px;height:2px;background:#e2e2e2;"></div><div style="position:absolute;left:1263px;top:488px;width:33px;height:4px;background:#858585;"></div><div style="position:absolute;left:1296px;top:483px;width:33px;height:14px;background:#5b9bd3;border-radius:2px"></div><div style="position:absolute;left:1296px;top:483px;width:14px;height:14px;background:#78d06c;border-radius:2px 0 0 2px"></div><span class="t" style="left:26.84px;top:480.30px;font-size:11px;color:#dbdbdb;transform:scaleX(1.0964);">sprite.svg</span><span class="t" style="left:334.74px;top:480.30px;font-size:11px;color:#dbdbdb;transform:scaleX(1.1097);">www.richard-dern.fr</span><span class="t" style="left:471.84px;top:480.30px;font-size:11px;color:#dbdbdb;transform:scaleX(1.0462);">svg</span><span class="t" style="left:541.74px;top:480.30px;font-size:11px;color:#a9a9a9;transform:scaleX(1.1152);"><u>www.richard-d</u><span class="e">…</span></span><span class="t" style="left:642.04px;top:480.30px;font-size:11px;color:#dbdbdb;transform:scaleX(1.1123);">2,63 <span class="e">…</span></span><span class="t" style="left:709.14px;top:480.30px;font-size:11px;color:#dbdbdb;transform:scaleX(1.0156);">211 ms</span></div><div style="position:absolute;left:0px;top:612px;width:1663px;height:1px;background:#474747;"></div><div style="position:absolute;left:0px;top:613px;width:1663px;height:28px;background:#262626;"></div><div style="position:absolute;left:0px;top:641px;width:1663px;height:1px;background:#3d3d3d;"></div><div style="position:absolute;left:1637px;top:618px;width:18px;height:18px;background:#5c5c5c;border-radius:50%"></div><div style="position:absolute;left:0px;top:642px;width:1663px;height:28px;background:#262626;"></div><div style="position:absolute;left:0px;top:670px;width:1663px;height:1px;background:#3d3d3d;"></div><div style="position:absolute;left:37px;top:645px;width:253px;height:22px;background:#2b2b2b;box-sizing:border-box;border:1px solid #414141;border-radius:4px"></div><div style="position:absolute;left:246px;top:646px;width:1px;height:20px;background:#414141;"></div><div style="position:absolute;left:267px;top:646px;width:1px;height:20px;background:#414141;"></div><div style="position:absolute;left:295px;top:648px;width:35px;height:17px;background:#2a4ea6;border-radius:3.5px"></div><div style="position:absolute;left:1361px;top:650px;width:12px;height:12px;background:#4b4b4b;border-radius:3px"></div><div style="position:absolute;left:1544px;top:648px;width:1px;height:16px;background:#414141;"></div><div style="position:absolute;left:1631px;top:648px;width:1px;height:16px;background:#414141;"></div><div style="position:absolute;left:0px;top:671px;width:1663px;height:34px;background:#262626;"></div><div style="position:absolute;left:0px;top:705px;width:1663px;height:1px;background:#3d3d3d;"></div><div style="position:absolute;left:0px;top:706px;width:1663px;height:30px;background:#262626;"></div><svg style="left:0;top:0" width="1663" height="736" viewBox="33 25 1663 736" fill="none" stroke-linecap="butt"><g stroke="#7e7e7e" stroke-width="1"><rect x="42.5" y="60.5" width="15" height="13"/><path d="M46.5 60.5 V73.5"/><rect x="66.5" y="60.5" width="15" height="13"/><path d="M66.5 69.5 H81.5"/><rect x="90.5" y="60.5" width="15" height="13"/><path d="M101.5 60.5 V73.5"/><circle cx="122" cy="67" r="5.6" stroke-width="1.2"/><path d="M114 67 H120 M124 67 H130 M122 59 V65 M122 69 V75" stroke-width="1.2"/><rect x="138.5" y="60.5" width="15" height="11" rx="1.5" fill="#2d2d2d"/><path d="M143.5 73.2 H148.5 M142.5 74.5 H149.5" stroke-width="1.2"/><rect x="211.5" y="61.5" width="13" height="5"/><path d="M218 66.5 V68.5 M214 70.5 V68.5 H222 V70.5"/><rect x="211.5" y="70.5" width="5" height="4"/><rect x="219.5" y="70.5" width="5" height="4"/><rect x="375.5" y="60.5" width="15" height="15" rx="2.5"/><path d="M379 64.5 L383 68 L379 71.5 M384.5 66 H387.5 M384.5 70 H387.5"/><path d="M537.5 61.5 H544.5 L548.5 65.5 V74.5 H537.5 Z"/><path d="M544.5 61.5 V65.5 H548.5" stroke-width="0.8"/><circle cx="702" cy="68" r="7.5" stroke="#8c8c8c"/><path d="M699.5 62.5 V72.5 M697 70 L699.5 72.8 L702 70 M704.5 74 V64 M702 66.5 L704.5 63.7 L707 66.5" stroke="#8c8c8c"/><circle cx="858" cy="68" r="7.5"/><path d="M858.5 63 V68.5 H855"/><ellipse cx="1044" cy="63.6" rx="6" ry="2.3"/><path d="M1038 63.6 V66.2 A6 2.3 0 0 0 1050 66.2 V63.6 M1038 67.5 V70 A6 2.3 0 0 0 1050 70 V67.5 M1038 71.2 V72.6 A6 2.3 0 0 0 1050 72.6 V71.2"/><rect x="1203.5" y="62.5" width="13" height="11"/><path d="M1205.5 71.5 L1208.3 67.5 L1210.5 70.3 L1212.3 68.3 L1214.5 71.5 Z" fill="#7e7e7e" stroke-width="0.6"/><rect x="1382.5" y="61.3" width="8.5" height="8.5" rx="0.8"/><rect x="1384.7" y="63.5" width="8.5" height="8.5" rx="0.8" fill="#141414"/><rect x="1387" y="65.8" width="8.5" height="8.7" rx="0.8" fill="#141414"/><rect x="1541.5" y="60.5" width="15" height="15" rx="2.5"/><path d="M1544.5 65.5 H1553.5 M1551 63 L1553.7 65.5 L1551 68 M1553.5 70.5 H1544.5 M1547 68 L1544.3 70.5 L1547 73"/><circle cx="1650.8" cy="66.2" r="4.1" stroke-width="1"/><path d="M1653.8 69.2 L1657.7 72.9" stroke-width="1.1"/><path d="M1688.28 66.20 L1688.28 68.80 L1686.55 69.12 L1686.21 69.93 L1687.21 71.37 L1685.37 73.21 L1683.93 72.21 L1683.12 72.55 L1682.80 74.28 L1680.20 74.28 L1679.88 72.55 L1679.07 72.21 L1677.63 73.21 L1675.79 71.37 L1676.79 69.93 L1676.45 69.12 L1674.72 68.80 L1674.72 66.20 L1676.45 65.88 L1676.79 65.07 L1675.79 63.63 L1677.63 61.79 L1679.07 62.79 L1679.88 62.45 L1680.20 60.72 L1682.80 60.72 L1683.12 62.45 L1683.93 62.79 L1685.37 61.79 L1687.21 63.63 L1686.21 65.07 L1686.55 65.88 Z" stroke-linejoin="round"/><circle cx="1681.5" cy="67.5" r="2.2"/></g><g stroke="#8e8e8e" stroke-width="1"><circle cx="51.4" cy="96.6" r="6"/><path d="M47.9 94.5 H54.9 M49.2 96.8 H53.6 M50.4 99 H52.4"/></g><path d="M231 93.6 L233.6 91 L236.2 93.6 M231 98.6 L233.6 101.2 L236.2 98.6" stroke="#d0d0d0" stroke-width="1.2"/><g stroke="#7d7d7d" stroke-width="1"><circle cx="257" cy="96" r="7.5"/><path d="M252.5 93.5 H261.5 M253.8 96.3 H260.2 M255.3 99 H258.7"/></g><rect x="1368" y="90.5" width="12" height="12" rx="2.8" fill="#cfcfcf"/><path d="M1370.8 96.8 L1373.2 99.4 L1377.4 93.4" stroke="#1e1e1e" stroke-width="1.6" stroke-linecap="round" stroke-linejoin="round"/><g stroke="#b4b4b4" stroke-width="1"><path d="M1523.5 90 V98.5 M1520.3 95.5 L1523.5 98.8 L1526.7 95.5 M1518.5 98 V101.5 H1528.5 V98"/><path d="M1603.5 99 V90.3 M1600.3 93.5 L1603.5 90.2 L1606.7 93.5 M1598.5 98 V101.5 H1608.5 V98"/></g><g stroke="#8e8e8e" stroke-width="1"><path d="M1676 91.5 H1689 M1680.5 91.5 V89.5 H1684.5 V91.5 M1677.3 91.5 L1678.3 101.5 H1686.7 L1687.7 91.5 M1680.3 94.3 L1684.7 98.9 M1684.7 94.3 L1680.3 98.9"/></g><path d="M1681.2 128.3 L1684.7 124.6 L1688.2 128.3" stroke="#b5b5b5" stroke-width="1.2"/><g stroke="#cfcfcf" stroke-width="1"><circle cx="691" cy="652" r="7.8" fill="#9a9a9a" stroke="none"/><path d="M684.5 649 L689.5 651.5 L687.5 657.5 M689.5 651.5 L693.2 646.2 L696.5 648 M689.5 651.5 L694.5 655 L698 653.2 M694.5 655 L693.3 659.3 M693.2 646.2 L690 644.6 M686 655 L683.6 653.5" stroke="#2c2c2c" stroke-width="0.9" fill="none"/><path d="M728 645.8 H735.5 L740 650.3 V658.5 H728 Z M735.5 645.8 V650.3 H740"/><path d="M788.2 649.8 H793.8 L796.8 657.7 H785.2 Z M788.9 649.8 V647.7 A1.2 1.2 0 0 1 790.1 646.5 H791.9 A1.2 1.2 0 0 1 793.1 647.7 V649.8"/><circle cx="871" cy="652" r="7.5"/><path d="M868.5 646.5 V656.5 M866 654 L868.5 656.8 L871 654 M873.5 658 V648 M871 650.5 L873.5 647.7 L876 650.5"/><path d="M943.6 653.6 L951 646.6 L957.2 652.9 M957.7 649.2 V653.6 H953.2" stroke-width="1.1"/><rect x="946.4" y="655.3" width="9.2" height="2.5" rx="0.5"/><circle cx="994.5" cy="652" r="6.8"/><path d="M995 647.5 V652.5 H991.8"/></g><g stroke="#8a8a8a" stroke-width="1"><g stroke="#a0a0a0"><rect x="42.5" y="675.5" width="13" height="10.5"/><path d="M45.8 679.5 H52.2 L49 683 Z"/></g><g stroke="#b4b4b4" stroke-width="1.2"><circle cx="81.3" cy="680" r="3.9"/><path d="M84 682.9 L86.8 685.8 M87.8 679.3 L89.8 681.2 L91.8 679.3"/></g><path d="M293.5 676.5 L288.5 681 L293.5 685.5 M309.5 676.5 L314.5 681 L309.5 685.5" stroke="#6e6e6e"/><circle cx="678" cy="681" r="7.5" stroke="#7d7d7d"/><path d="M673.5 678.5 H682.5 M674.8 681.3 H681.2 M676.3 684 H679.7" stroke="#7d7d7d"/><path d="M1586.5 674.5 H1599.5 V683.6 L1595.6 687.5 H1586.5 Z" fill="#333" stroke="#bdbdbd"/><path d="M1595.6 687.5 V683.6 H1599.5" stroke="#bdbdbd" fill="#262626"/><circle cx="1622.2" cy="681.1" r="6.5" stroke="#8c8c8c" stroke-width="1"/><path d="M1626.39 675.34 L1622.67 671.69 L1621.50 677.17 Z M1625.09 687.60 L1630.11 686.21 L1625.95 682.46 Z M1615.12 680.35 L1613.82 685.40 L1619.14 683.67 Z " fill="#8c8c8c" stroke="#2a2a2a" stroke-width="0.6"/><path d="M1645 677.5 H1658 M1649.5 677.5 V675.5 H1653.5 V677.5 M1646.3 677.5 L1647.3 687.5 H1655.7 L1656.7 677.5 M1649.3 680.3 L1653.7 684.9 M1653.7 680.3 L1649.3 684.9" stroke="#7a7a7a"/><path d="M1675.8 680.6 L1680 676.6 L1684.2 680.6 M1675.8 686.2 L1680 682.2 L1684.2 686.2" stroke="#a2a2a2" stroke-width="1.2"/></g><text x="1592.8" y="681.8" text-anchor="middle" font-family="Liberation Mono,monospace" font-size="6.5" font-weight="700" fill="#7d62d8" stroke="none">JS</text><path d="M42.3 741.2 L46.5 745.3 L42.3 749.4" stroke="#2b6bf3" stroke-width="2.2"/></svg><span class="t" style="left:705.06px;top:4.60px;font-size:13px;color:#525252;transform:scaleX(1.0579);font-weight:700;">Inspecteur web — www.richard-dern.fr</span><span class="t" style="left:198.94px;top:33.20px;font-size:11px;color:#8a8a8a;transform:scaleX(1.0449);-webkit-text-stroke:0.4px #8a8a8a;">Éléments</span><span class="t" style="left:363.94px;top:33.20px;font-size:11px;color:#8a8a8a;transform:scaleX(1.0609);-webkit-text-stroke:0.4px #8a8a8a;">Console</span><span class="t" style="left:523.24px;top:33.20px;font-size:11px;color:#8a8a8a;transform:scaleX(1.0708);-webkit-text-stroke:0.4px #8a8a8a;">Sources</span><span class="t" style="left:683.14px;top:33.20px;font-size:11px;color:#959595;transform:scaleX(1.0183);-webkit-text-stroke:0.4px #959595;">Réseau</span><span class="t" style="left:838.34px;top:33.20px;font-size:11px;color:#8a8a8a;transform:scaleX(1.0754);-webkit-text-stroke:0.4px #8a8a8a;">Chronologies</span><span class="t" style="left:1024.54px;top:33.20px;font-size:11px;color:#8a8a8a;transform:scaleX(1.0750);-webkit-text-stroke:0.4px #8a8a8a;">Stockage</span><span class="t" style="left:1190.74px;top:33.20px;font-size:11px;color:#8a8a8a;transform:scaleX(1.0560);-webkit-text-stroke:0.4px #8a8a8a;">Graphismes</span><span class="t" style="left:1370.04px;top:33.20px;font-size:11px;color:#8a8a8a;transform:scaleX(1.0609);-webkit-text-stroke:0.4px #8a8a8a;">Calques</span><span class="t" style="left:1529.74px;top:33.20px;font-size:11px;color:#8a8a8a;transform:scaleX(1.0773);-webkit-text-stroke:0.4px #8a8a8a;">Audit</span><span class="t" style="left:28.84px;top:62.00px;font-size:11px;color:#a2a2a2;transform:scaleX(1.0823);">Filtrer l’URL complète</span><span class="t" style="left:168.74px;top:60.60px;font-size:11px;color:#dedede;transform:scaleX(1.1115);">Tout</span><span class="t" style="left:1351.34px;top:60.70px;font-size:11px;color:#bdbdbd;transform:scaleX(1.0740);">Désactiver les caches</span><span class="t" style="left:1501.84px;top:60.70px;font-size:11px;color:#bdbdbd;transform:scaleX(1.1061);">Importer</span><span class="t" style="left:1582.04px;top:60.70px;font-size:11px;color:#bdbdbd;transform:scaleX(1.0803);">Exporter</span><span class="t" style="left:7.14px;top:90.30px;font-size:11px;color:#e4e4e4;transform:scaleX(1.0595);">Nom</span><span class="t" style="left:321.84px;top:90.30px;font-size:11px;color:#e4e4e4;transform:scaleX(1.0451);">Domaine</span><span class="t" style="left:471.74px;top:90.30px;font-size:11px;color:#e4e4e4;transform:scaleX(1.0862);">Type</span><span class="t" style="left:541.94px;top:90.30px;font-size:11px;color:#e4e4e4;transform:scaleX(1.1022);">Initiateur</span><span class="t" style="left:641.64px;top:90.30px;font-size:11px;color:#e4e4e4;transform:scaleX(1.1132);">Taille<span class="e">…</span></span><span class="t" style="left:713.24px;top:90.30px;font-size:11px;color:#e4e4e4;transform:scaleX(1.0583);">Durée</span><span class="t" style="left:799.20px;top:93.80px;font-size:9.5px;color:#8b8b8b;transform:scaleX(1.0618);-webkit-text-stroke:0;">50,00 ms</span><span class="t" style="left:890.10px;top:93.80px;font-size:9.5px;color:#8b8b8b;transform:scaleX(1.0274);-webkit-text-stroke:0;">100,00 ms</span><span class="t" style="left:990.60px;top:93.80px;font-size:9.5px;color:#8b8b8b;transform:scaleX(1.0259);-webkit-text-stroke:0;">150,0 ms</span><span class="t" style="left:1084.40px;top:93.80px;font-size:9.5px;color:#8b8b8b;transform:scaleX(1.0566);-webkit-text-stroke:0;">200,0 ms</span><span class="t" style="left:1179.40px;top:93.80px;font-size:9.5px;color:#8b8b8b;transform:scaleX(1.0566);-webkit-text-stroke:0;">250,0 ms</span><span class="t" style="left:1274.40px;top:93.80px;font-size:9.5px;color:#8b8b8b;transform:scaleX(1.0566);-webkit-text-stroke:0;">300,0 ms</span><span class="t" style="left:1369.40px;top:93.80px;font-size:9.5px;color:#8b8b8b;transform:scaleX(1.0566);-webkit-text-stroke:0;">350,0 ms</span><span class="t" style="left:1464.40px;top:93.80px;font-size:9.5px;color:#8b8b8b;transform:scaleX(1.0566);-webkit-text-stroke:0;">400,0 ms</span><span class="t" style="left:1558.40px;top:93.80px;font-size:9.5px;color:#8b8b8b;transform:scaleX(1.0566);-webkit-text-stroke:0;">450,0 ms</span><span class="t" style="left:26.84px;top:115.30px;font-size:11px;color:#dbdbdb;transform:scaleX(1.1086);">www.richard-dern.fr</span><span class="t" style="left:334.74px;top:115.30px;font-size:11px;color:#dbdbdb;transform:scaleX(1.1097);">www.richard-dern.fr</span><span class="t" style="left:471.84px;top:115.30px;font-size:11px;color:#dbdbdb;transform:scaleX(1.0912);">document</span><span class="t" style="left:541.84px;top:115.30px;font-size:11px;color:#dbdbdb;transform:scaleX(1.0700);">—</span><span class="t" style="left:642.04px;top:115.30px;font-size:11px;color:#dbdbdb;transform:scaleX(1.0450);">7,34 ko</span><span class="t" style="left:704.44px;top:115.30px;font-size:11px;color:#dbdbdb;transform:scaleX(1.0352);">77,9 ms</span><span class="t" style="left:26.84px;top:135.30px;font-size:11px;color:#dbdbdb;transform:scaleX(1.1001);">compiled.min.38390909f303624ed9e1cf1bd3fc71e<span class="e">…</span></span><span class="t" style="left:334.74px;top:135.30px;font-size:11px;color:#dbdbdb;transform:scaleX(1.1097);">www.richard-dern.fr</span><span class="t" style="left:471.84px;top:135.30px;font-size:11px;color:#dbdbdb;transform:scaleX(1.0737);">css</span><span class="t" style="left:541.74px;top:135.30px;font-size:11px;color:#a9a9a9;transform:scaleX(1.1152);"><u>www.richard-d</u><span class="e">…</span></span><span class="t" style="left:642.04px;top:135.30px;font-size:11px;color:#dbdbdb;transform:scaleX(1.0649);">13,68<span class="e">…</span></span><span class="t" style="left:704.14px;top:135.30px;font-size:11px;color:#dbdbdb;transform:scaleX(1.0428);">15,8 ms</span><span class="t" style="left:26.84px;top:155.30px;font-size:11px;color:#dbdbdb;transform:scaleX(1.0964);">sprite.svg</span><span class="t" style="left:334.74px;top:155.30px;font-size:11px;color:#dbdbdb;transform:scaleX(1.1097);">www.richard-dern.fr</span><span class="t" style="left:471.84px;top:155.30px;font-size:11px;color:#dbdbdb;transform:scaleX(1.0462);">svg</span><span class="t" style="left:541.74px;top:155.30px;font-size:11px;color:#a9a9a9;transform:scaleX(1.1152);"><u>www.richard-d</u><span class="e">…</span></span><span class="t" style="left:642.04px;top:155.30px;font-size:11px;color:#dbdbdb;transform:scaleX(1.1041);">2,66 <span class="e">…</span></span><span class="t" style="left:704.14px;top:155.30px;font-size:11px;color:#dbdbdb;transform:scaleX(1.0428);">13,9 ms</span><span class="t" style="left:26.84px;top:175.30px;font-size:11px;color:#dbdbdb;transform:scaleX(1.1025);">avatar_hu85ecc3e298728880b0bde2dcc4e5c230_<span class="e">…</span></span><span class="t" style="left:334.74px;top:175.30px;font-size:11px;color:#dbdbdb;transform:scaleX(1.1097);">www.richard-dern.fr</span><span class="t" style="left:471.84px;top:175.30px;font-size:11px;color:#dbdbdb;transform:scaleX(1.0768);">webp</span><span class="t" style="left:541.74px;top:175.30px;font-size:11px;color:#a9a9a9;transform:scaleX(1.1152);"><u>www.richard-d</u><span class="e">…</span></span><span class="t" style="left:648.64px;top:175.30px;font-size:11px;color:#dbdbdb;transform:scaleX(1.1200);letter-spacing:0.050px;">494 o</span><span class="t" style="left:702.94px;top:175.30px;font-size:11px;color:#dbdbdb;transform:scaleX(1.0735);">23,6 ms</span><span class="t" style="left:26.84px;top:195.30px;font-size:11px;color:#dbdbdb;transform:scaleX(1.0964);">sprite.svg</span><span class="t" style="left:334.74px;top:195.30px;font-size:11px;color:#dbdbdb;transform:scaleX(1.1097);">www.richard-dern.fr</span><span class="t" style="left:471.84px;top:195.30px;font-size:11px;color:#dbdbdb;transform:scaleX(1.0462);">svg</span><span class="t" style="left:541.74px;top:195.30px;font-size:11px;color:#a9a9a9;transform:scaleX(1.1152);"><u>www.richard-d</u><span class="e">…</span></span><span class="t" style="left:642.04px;top:195.30px;font-size:11px;color:#dbdbdb;transform:scaleX(1.1123);">2,63 <span class="e">…</span></span><span class="t" style="left:702.94px;top:195.30px;font-size:11px;color:#dbdbdb;transform:scaleX(1.0735);">23,6 ms</span><span class="t" style="left:26.84px;top:215.30px;font-size:11px;color:#dbdbdb;transform:scaleX(1.0964);">sprite.svg</span><span class="t" style="left:334.74px;top:215.30px;font-size:11px;color:#dbdbdb;transform:scaleX(1.1097);">www.richard-dern.fr</span><span class="t" style="left:471.84px;top:215.30px;font-size:11px;color:#dbdbdb;transform:scaleX(1.0462);">svg</span><span class="t" style="left:541.74px;top:215.30px;font-size:11px;color:#a9a9a9;transform:scaleX(1.1152);"><u>www.richard-d</u><span class="e">…</span></span><span class="t" style="left:642.04px;top:215.30px;font-size:11px;color:#dbdbdb;transform:scaleX(1.1123);">2,63 <span class="e">…</span></span><span class="t" style="left:702.34px;top:215.30px;font-size:11px;color:#dbdbdb;transform:scaleX(1.0888);">39,6 ms</span><span class="t" style="left:26.84px;top:235.30px;font-size:11px;color:#dbdbdb;transform:scaleX(1.0964);">sprite.svg</span><span class="t" style="left:334.74px;top:235.30px;font-size:11px;color:#dbdbdb;transform:scaleX(1.1097);">www.richard-dern.fr</span><span class="t" style="left:471.84px;top:235.30px;font-size:11px;color:#dbdbdb;transform:scaleX(1.0462);">svg</span><span class="t" style="left:541.74px;top:235.30px;font-size:11px;color:#a9a9a9;transform:scaleX(1.1152);"><u>www.richard-d</u><span class="e">…</span></span><span class="t" style="left:642.04px;top:235.30px;font-size:11px;color:#dbdbdb;transform:scaleX(1.1123);">2,63 <span class="e">…</span></span><span class="t" style="left:702.34px;top:235.30px;font-size:11px;color:#dbdbdb;transform:scaleX(1.0888);">39,5 ms</span><span class="t" style="left:26.84px;top:255.30px;font-size:11px;color:#dbdbdb;transform:scaleX(1.0964);">sprite.svg</span><span class="t" style="left:334.74px;top:255.30px;font-size:11px;color:#dbdbdb;transform:scaleX(1.1097);">www.richard-dern.fr</span><span class="t" style="left:471.84px;top:255.30px;font-size:11px;color:#dbdbdb;transform:scaleX(1.0462);">svg</span><span class="t" style="left:541.74px;top:255.30px;font-size:11px;color:#a9a9a9;transform:scaleX(1.1152);"><u>www.richard-d</u><span class="e">…</span></span><span class="t" style="left:642.04px;top:255.30px;font-size:11px;color:#dbdbdb;transform:scaleX(1.1123);">2,63 <span class="e">…</span></span><span class="t" style="left:702.84px;top:255.30px;font-size:11px;color:#dbdbdb;transform:scaleX(1.0760);">53,2 ms</span><span class="t" style="left:26.84px;top:275.30px;font-size:11px;color:#dbdbdb;transform:scaleX(1.0964);">sprite.svg</span><span class="t" style="left:334.74px;top:275.30px;font-size:11px;color:#dbdbdb;transform:scaleX(1.1097);">www.richard-dern.fr</span><span class="t" style="left:471.84px;top:275.30px;font-size:11px;color:#dbdbdb;transform:scaleX(1.0462);">svg</span><span class="t" style="left:541.74px;top:275.30px;font-size:11px;color:#a9a9a9;transform:scaleX(1.1152);"><u>www.richard-d</u><span class="e">…</span></span><span class="t" style="left:642.04px;top:275.30px;font-size:11px;color:#dbdbdb;transform:scaleX(1.1123);">2,63 <span class="e">…</span></span><span class="t" style="left:704.54px;top:275.30px;font-size:11px;color:#dbdbdb;transform:scaleX(1.0326);">53,1 ms</span><span class="t" style="left:26.84px;top:295.30px;font-size:11px;color:#dbdbdb;transform:scaleX(1.0964);">sprite.svg</span><span class="t" style="left:334.74px;top:295.30px;font-size:11px;color:#dbdbdb;transform:scaleX(1.1097);">www.richard-dern.fr</span><span class="t" style="left:471.84px;top:295.30px;font-size:11px;color:#dbdbdb;transform:scaleX(1.0462);">svg</span><span class="t" style="left:541.74px;top:295.30px;font-size:11px;color:#a9a9a9;transform:scaleX(1.1152);"><u>www.richard-d</u><span class="e">…</span></span><span class="t" style="left:642.04px;top:295.30px;font-size:11px;color:#dbdbdb;transform:scaleX(1.1123);">2,63 <span class="e">…</span></span><span class="t" style="left:707.54px;top:295.30px;font-size:11px;color:#dbdbdb;transform:scaleX(1.0371);">120 ms</span><span class="t" style="left:26.84px;top:315.30px;font-size:11px;color:#dbdbdb;transform:scaleX(1.0964);">sprite.svg</span><span class="t" style="left:334.74px;top:315.30px;font-size:11px;color:#dbdbdb;transform:scaleX(1.1097);">www.richard-dern.fr</span><span class="t" style="left:471.84px;top:315.30px;font-size:11px;color:#dbdbdb;transform:scaleX(1.0462);">svg</span><span class="t" style="left:541.74px;top:315.30px;font-size:11px;color:#a9a9a9;transform:scaleX(1.1152);"><u>www.richard-d</u><span class="e">…</span></span><span class="t" style="left:642.04px;top:315.30px;font-size:11px;color:#dbdbdb;transform:scaleX(1.1123);">2,63 <span class="e">…</span></span><span class="t" style="left:707.54px;top:315.30px;font-size:11px;color:#dbdbdb;transform:scaleX(1.0371);">120 ms</span><span class="t" style="left:26.84px;top:335.30px;font-size:11px;color:#dbdbdb;transform:scaleX(1.0964);">sprite.svg</span><span class="t" style="left:334.74px;top:335.30px;font-size:11px;color:#dbdbdb;transform:scaleX(1.1097);">www.richard-dern.fr</span><span class="t" style="left:471.84px;top:335.30px;font-size:11px;color:#dbdbdb;transform:scaleX(1.0462);">svg</span><span class="t" style="left:541.74px;top:335.30px;font-size:11px;color:#a9a9a9;transform:scaleX(1.1152);"><u>www.richard-d</u><span class="e">…</span></span><span class="t" style="left:642.04px;top:335.30px;font-size:11px;color:#dbdbdb;transform:scaleX(1.1123);">2,63 <span class="e">…</span></span><span class="t" style="left:708.84px;top:335.30px;font-size:11px;color:#dbdbdb;transform:scaleX(1.0011);">131 ms</span><span class="t" style="left:26.84px;top:355.30px;font-size:11px;color:#dbdbdb;transform:scaleX(1.0964);">sprite.svg</span><span class="t" style="left:334.74px;top:355.30px;font-size:11px;color:#dbdbdb;transform:scaleX(1.1097);">www.richard-dern.fr</span><span class="t" style="left:471.84px;top:355.30px;font-size:11px;color:#dbdbdb;transform:scaleX(1.0462);">svg</span><span class="t" style="left:541.74px;top:355.30px;font-size:11px;color:#a9a9a9;transform:scaleX(1.1152);"><u>www.richard-d</u><span class="e">…</span></span><span class="t" style="left:642.04px;top:355.30px;font-size:11px;color:#dbdbdb;transform:scaleX(1.1123);">2,63 <span class="e">…</span></span><span class="t" style="left:708.84px;top:355.30px;font-size:11px;color:#dbdbdb;transform:scaleX(1.0011);">131 ms</span><span class="t" style="left:26.84px;top:375.30px;font-size:11px;color:#dbdbdb;transform:scaleX(1.0964);">sprite.svg</span><span class="t" style="left:334.74px;top:375.30px;font-size:11px;color:#dbdbdb;transform:scaleX(1.1097);">www.richard-dern.fr</span><span class="t" style="left:471.84px;top:375.30px;font-size:11px;color:#dbdbdb;transform:scaleX(1.0462);">svg</span><span class="t" style="left:541.74px;top:375.30px;font-size:11px;color:#a9a9a9;transform:scaleX(1.1152);"><u>www.richard-d</u><span class="e">…</span></span><span class="t" style="left:642.04px;top:375.30px;font-size:11px;color:#dbdbdb;transform:scaleX(1.1123);">2,63 <span class="e">…</span></span><span class="t" style="left:706.94px;top:375.30px;font-size:11px;color:#dbdbdb;transform:scaleX(1.0537);">146 ms</span><span class="t" style="left:26.84px;top:395.30px;font-size:11px;color:#dbdbdb;transform:scaleX(1.0964);">sprite.svg</span><span class="t" style="left:334.74px;top:395.30px;font-size:11px;color:#dbdbdb;transform:scaleX(1.1097);">www.richard-dern.fr</span><span class="t" style="left:471.84px;top:395.30px;font-size:11px;color:#dbdbdb;transform:scaleX(1.0462);">svg</span><span class="t" style="left:541.74px;top:395.30px;font-size:11px;color:#a9a9a9;transform:scaleX(1.1152);"><u>www.richard-d</u><span class="e">…</span></span><span class="t" style="left:642.04px;top:395.30px;font-size:11px;color:#dbdbdb;transform:scaleX(1.1123);">2,63 <span class="e">…</span></span><span class="t" style="left:706.94px;top:395.30px;font-size:11px;color:#dbdbdb;transform:scaleX(1.0537);">146 ms</span><span class="t" style="left:26.84px;top:415.30px;font-size:11px;color:#dbdbdb;transform:scaleX(1.0964);">sprite.svg</span><span class="t" style="left:334.74px;top:415.30px;font-size:11px;color:#dbdbdb;transform:scaleX(1.1097);">www.richard-dern.fr</span><span class="t" style="left:471.84px;top:415.30px;font-size:11px;color:#dbdbdb;transform:scaleX(1.0462);">svg</span><span class="t" style="left:541.74px;top:415.30px;font-size:11px;color:#a9a9a9;transform:scaleX(1.1152);"><u>www.richard-d</u><span class="e">…</span></span><span class="t" style="left:642.04px;top:415.30px;font-size:11px;color:#dbdbdb;transform:scaleX(1.1123);">2,63 <span class="e">…</span></span><span class="t" style="left:707.54px;top:415.30px;font-size:11px;color:#dbdbdb;transform:scaleX(1.0371);">159 ms</span><span class="t" style="left:26.84px;top:435.30px;font-size:11px;color:#dbdbdb;transform:scaleX(1.0964);">sprite.svg</span><span class="t" style="left:334.74px;top:435.30px;font-size:11px;color:#dbdbdb;transform:scaleX(1.1097);">www.richard-dern.fr</span><span class="t" style="left:471.84px;top:435.30px;font-size:11px;color:#dbdbdb;transform:scaleX(1.0462);">svg</span><span class="t" style="left:541.74px;top:435.30px;font-size:11px;color:#a9a9a9;transform:scaleX(1.1152);"><u>www.richard-d</u><span class="e">…</span></span><span class="t" style="left:642.04px;top:435.30px;font-size:11px;color:#dbdbdb;transform:scaleX(1.1123);">2,63 <span class="e">…</span></span><span class="t" style="left:707.54px;top:435.30px;font-size:11px;color:#dbdbdb;transform:scaleX(1.0371);">159 ms</span><span class="t" style="left:26.84px;top:455.30px;font-size:11px;color:#dbdbdb;transform:scaleX(1.0964);">sprite.svg</span><span class="t" style="left:334.74px;top:455.30px;font-size:11px;color:#dbdbdb;transform:scaleX(1.1097);">www.richard-dern.fr</span><span class="t" style="left:471.84px;top:455.30px;font-size:11px;color:#dbdbdb;transform:scaleX(1.0462);">svg</span><span class="t" style="left:541.74px;top:455.30px;font-size:11px;color:#a9a9a9;transform:scaleX(1.1152);"><u>www.richard-d</u><span class="e">…</span></span><span class="t" style="left:642.04px;top:455.30px;font-size:11px;color:#dbdbdb;transform:scaleX(1.1123);">2,63 <span class="e">…</span></span><span class="t" style="left:708.34px;top:455.30px;font-size:11px;color:#dbdbdb;transform:scaleX(1.0149);">174 ms</span><span class="t" style="left:26.84px;top:475.30px;font-size:11px;color:#dbdbdb;transform:scaleX(1.0964);">sprite.svg</span><span class="t" style="left:334.74px;top:475.30px;font-size:11px;color:#dbdbdb;transform:scaleX(1.1097);">www.richard-dern.fr</span><span class="t" style="left:471.84px;top:475.30px;font-size:11px;color:#dbdbdb;transform:scaleX(1.0462);">svg</span><span class="t" style="left:541.74px;top:475.30px;font-size:11px;color:#a9a9a9;transform:scaleX(1.1152);"><u>www.richard-d</u><span class="e">…</span></span><span class="t" style="left:642.04px;top:475.30px;font-size:11px;color:#dbdbdb;transform:scaleX(1.1123);">2,63 <span class="e">…</span></span><span class="t" style="left:708.34px;top:475.30px;font-size:11px;color:#dbdbdb;transform:scaleX(1.0149);">174 ms</span><span class="t" style="left:26.84px;top:495.30px;font-size:11px;color:#dbdbdb;transform:scaleX(1.0964);">sprite.svg</span><span class="t" style="left:334.74px;top:495.30px;font-size:11px;color:#dbdbdb;transform:scaleX(1.1097);">www.richard-dern.fr</span><span class="t" style="left:471.84px;top:495.30px;font-size:11px;color:#dbdbdb;transform:scaleX(1.0462);">svg</span><span class="t" style="left:541.74px;top:495.30px;font-size:11px;color:#a9a9a9;transform:scaleX(1.1152);"><u>www.richard-d</u><span class="e">…</span></span><span class="t" style="left:642.04px;top:495.30px;font-size:11px;color:#dbdbdb;transform:scaleX(1.1123);">2,63 <span class="e">…</span></span><span class="t" style="left:706.94px;top:495.30px;font-size:11px;color:#dbdbdb;transform:scaleX(1.0537);">196 ms</span><span class="t" style="left:26.84px;top:515.30px;font-size:11px;color:#dbdbdb;transform:scaleX(1.0964);">sprite.svg</span><span class="t" style="left:334.74px;top:515.30px;font-size:11px;color:#dbdbdb;transform:scaleX(1.1097);">www.richard-dern.fr</span><span class="t" style="left:471.84px;top:515.30px;font-size:11px;color:#dbdbdb;transform:scaleX(1.0462);">svg</span><span class="t" style="left:541.74px;top:515.30px;font-size:11px;color:#a9a9a9;transform:scaleX(1.1152);"><u>www.richard-d</u><span class="e">…</span></span><span class="t" style="left:642.04px;top:515.30px;font-size:11px;color:#dbdbdb;transform:scaleX(1.1123);">2,63 <span class="e">…</span></span><span class="t" style="left:706.94px;top:515.30px;font-size:11px;color:#dbdbdb;transform:scaleX(1.0537);">195 ms</span><span class="t" style="left:26.84px;top:535.30px;font-size:11px;color:#dbdbdb;transform:scaleX(1.0964);">sprite.svg</span><span class="t" style="left:334.74px;top:535.30px;font-size:11px;color:#dbdbdb;transform:scaleX(1.1097);">www.richard-dern.fr</span><span class="t" style="left:471.84px;top:535.30px;font-size:11px;color:#dbdbdb;transform:scaleX(1.0462);">svg</span><span class="t" style="left:541.74px;top:535.30px;font-size:11px;color:#a9a9a9;transform:scaleX(1.1152);"><u>www.richard-d</u><span class="e">…</span></span><span class="t" style="left:642.04px;top:535.30px;font-size:11px;color:#dbdbdb;transform:scaleX(1.1123);">2,63 <span class="e">…</span></span><span class="t" style="left:705.54px;top:535.30px;font-size:11px;color:#dbdbdb;transform:scaleX(1.0925);">202 ms</span><span class="t" style="left:26.84px;top:555.30px;font-size:11px;color:#dbdbdb;transform:scaleX(1.0989);">cover_hu736519dc3b5040cfa48b6b559b6de6ec_1<span class="e">…</span></span><span class="t" style="left:334.74px;top:555.30px;font-size:11px;color:#dbdbdb;transform:scaleX(1.1097);">www.richard-dern.fr</span><span class="t" style="left:471.84px;top:555.30px;font-size:11px;color:#dbdbdb;transform:scaleX(1.0768);">webp</span><span class="t" style="left:541.74px;top:555.30px;font-size:11px;color:#a9a9a9;transform:scaleX(1.1152);"><u>www.richard-d</u><span class="e">…</span></span><span class="t" style="left:642.04px;top:555.30px;font-size:11px;color:#dbdbdb;transform:scaleX(1.0104);">17,20<span class="e">…</span></span><span class="t" style="left:705.54px;top:555.30px;font-size:11px;color:#dbdbdb;transform:scaleX(1.0925);">220 ms</span><span class="t" style="left:26.84px;top:575.30px;font-size:11px;color:#dbdbdb;transform:scaleX(1.0989);">cover_hu736519dc3b5040cfa48b6b559b6de6ec_1<span class="e">…</span></span><span class="t" style="left:334.74px;top:575.30px;font-size:11px;color:#dbdbdb;transform:scaleX(1.1097);">www.richard-dern.fr</span><span class="t" style="left:471.84px;top:575.30px;font-size:11px;color:#dbdbdb;transform:scaleX(1.0768);">webp</span><span class="t" style="left:541.74px;top:575.30px;font-size:11px;color:#a9a9a9;transform:scaleX(1.1152);"><u>www.richard-d</u><span class="e">…</span></span><span class="t" style="left:642.04px;top:575.30px;font-size:11px;color:#dbdbdb;transform:scaleX(1.0104);">17,24<span class="e">…</span></span><span class="t" style="left:702.34px;top:575.30px;font-size:11px;color:#dbdbdb;transform:scaleX(1.0888);">85,4 ms</span><span class="t" style="left:670.84px;top:617.20px;font-size:11px;color:#d4d4d4;transform:scaleX(1.0700);">1</span><span class="t" style="left:713.94px;top:617.20px;font-size:11px;color:#d4d4d4;transform:scaleX(1.1200);letter-spacing:0.046px;">149</span><span class="t" style="left:771.44px;top:617.20px;font-size:11px;color:#d4d4d4;transform:scaleX(1.0746);">1,86 Mo</span><span class="t" style="left:850.84px;top:617.20px;font-size:11px;color:#d4d4d4;transform:scaleX(1.0847);">1,43 Mo</span><span class="t" style="left:929.84px;top:617.20px;font-size:11px;color:#d4d4d4;transform:scaleX(1.0700);">0</span><span class="t" style="left:972.64px;top:617.20px;font-size:11px;color:#d4d4d4;transform:scaleX(1.1064);">571 ms</span><span class="t" style="left:1641.95px;top:617.70px;font-size:13px;color:#f0f0f0;transform:scaleX(1.0700);font-weight:700;">?</span><span class="t" style="left:301.24px;top:646.30px;font-size:11px;color:#ffffff;transform:scaleX(1.1067);">Tout</span><span class="t" style="left:340.04px;top:646.30px;font-size:11px;color:#dadada;transform:scaleX(1.0500);">Évaluations</span><span class="t" style="left:415.54px;top:646.30px;font-size:11px;color:#dadada;transform:scaleX(1.0597);">Erreurs</span><span class="t" style="left:469.24px;top:646.30px;font-size:11px;color:#dadada;transform:scaleX(1.0749);">Avertissements</span><span class="t" style="left:565.54px;top:646.30px;font-size:11px;color:#dadada;transform:scaleX(1.0906);">Historiques</span><span class="t" style="left:1377.44px;top:646.30px;font-size:11px;color:#a9a9a9;transform:scaleX(1.0815);">Émuler le geste de l’utilisateur</span><span class="t" style="left:753.00px;top:682.10px;font-size:12px;color:#808080;transform:scaleX(1.0644);">Console effacée à 01:30:42</span>
<div id="ring"></div>
</div>
</body></html>
